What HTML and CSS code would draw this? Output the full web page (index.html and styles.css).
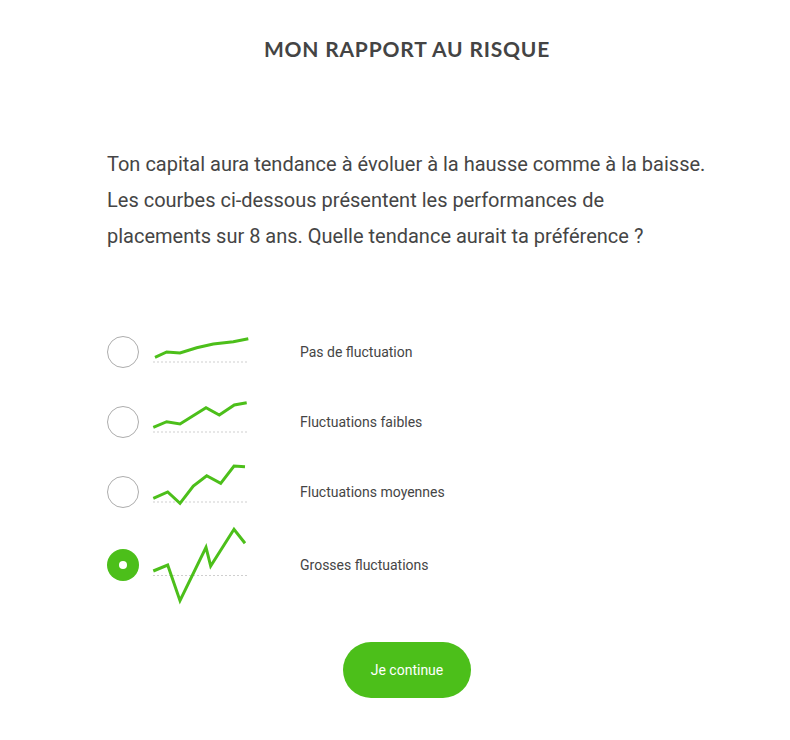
FILE: index.html
```html
<!DOCTYPE html>
<html lang="fr">
<head>
<meta charset="utf-8">
<link rel="stylesheet" href="styles.css">
</head>
<body>
<div class="page">
  <h1 class="title">MON RAPPORT AU RISQUE</h1>
  <p class="question">Ton capital aura tendance à évoluer à la hausse comme à la baisse. Les courbes ci-dessous présentent les performances de placements sur 8 ans. Quelle tendance aurait ta préférence ?</p>
  <div class="options">
    <div class="option">
      <span class="radio"></span>
      <svg class="chart" viewBox="150 312 100 80" width="100" height="80">
        <line class="base" x1="153" y1="362" x2="247" y2="362"/>
        <polyline class="curve" points="155,357.3 166.7,352 180,353 196.7,347.7 213.3,344 233.3,341.7 248.3,338.7"/>
      </svg>
      <span class="label">Pas de fluctuation</span>
    </div>
    <div class="option">
      <span class="radio"></span>
      <svg class="chart" viewBox="150 382 100 80" width="100" height="80">
        <line class="base" x1="153" y1="432" x2="247" y2="432"/>
        <polyline class="curve" points="153.3,427.3 166.7,421.7 180,424 206,407.7 219.3,415 234.3,405 246.7,402.7"/>
      </svg>
      <span class="label">Fluctuations faibles</span>
    </div>
    <div class="option">
      <span class="radio"></span>
      <svg class="chart" viewBox="150 452 100 80" width="100" height="80">
        <line class="base" x1="153" y1="502" x2="247" y2="502"/>
        <polyline class="curve" points="153.3,498.3 167.7,492 180,503.3 193.3,486 206.7,475.7 220.7,483.3 234,466 245,466.7"/>
      </svg>
      <span class="label">Fluctuations moyennes</span>
    </div>
    <div class="option last">
      <span class="radio checked"></span>
      <svg class="chart" viewBox="150 525 100 80" width="100" height="80">
        <line class="base" x1="153" y1="575.5" x2="247" y2="575.5"/>
        <polyline class="curve" points="153.3,571 167.7,565 180,600.7 206,547.3 210.7,566 234,529.3 245,543.3"/>
      </svg>
      <span class="label">Grosses fluctuations</span>
    </div>
  </div>
  <div class="actions">
    <button class="btn" type="button">Je continue</button>
  </div>
</div>
</body>
</html>
```

FILE: styles.css
```css
html, body {
  margin: 0;
  padding: 0;
  background: #ffffff;
}
body {
  font-family: Roboto, "Liberation Sans", Arial, sans-serif;
  color: #454545;
}
.page {
  width: 600px;
  margin-left: 107px;
  padding-top: 35px;
}
.title {
  margin: 0;
  text-align: center;
  font-family: Lato, "Open Sans", sans-serif;
  font-weight: 700;
  font-size: 21px;
  line-height: 28px;
  letter-spacing: 0.8px;
  color: #444444;
}
.question {
  margin: 83px 0 0 0;
  font-size: 20px;
  line-height: 36px;
  color: #454545;
}
.options {
  margin-top: 63px;
  display: flex;
  flex-direction: column;
}
.option {
  display: flex;
  align-items: center;
  height: 70px;
}
.option.last {
  margin-top: 3px;
}
.radio {
  flex: none;
  box-sizing: border-box;
  width: 32px;
  height: 32px;
  border-radius: 50%;
  border: 1px solid #adadad;
  background: #fff;
  display: flex;
  align-items: center;
  justify-content: center;
}
.radio.checked {
  border: none;
  background: #4cbf1a;
}
.radio.checked::after {
  content: "";
  width: 8px;
  height: 8px;
  border-radius: 50%;
  background: #fff;
}
.chart {
  flex: none;
  margin-left: 11px;
  overflow: visible;
}
.base {
  stroke: #cfcfcf;
  stroke-width: 1;
  stroke-dasharray: 2 2;
}
.curve {
  fill: none;
  stroke: #4cbf1a;
  stroke-width: 3;
  stroke-linejoin: miter;
}
.label {
  margin-left: 50px;
  font-size: 14px;
  color: #454545;
}
.actions {
  display: flex;
  justify-content: center;
  margin-top: 42px;
}
.btn {
  width: 128px;
  height: 56px;
  border: none;
  border-radius: 28px;
  background: #4cbf1a;
  color: #fff;
  font-family: Roboto, "Liberation Sans", Arial, sans-serif;
  font-size: 14px;
  cursor: pointer;
}
```
